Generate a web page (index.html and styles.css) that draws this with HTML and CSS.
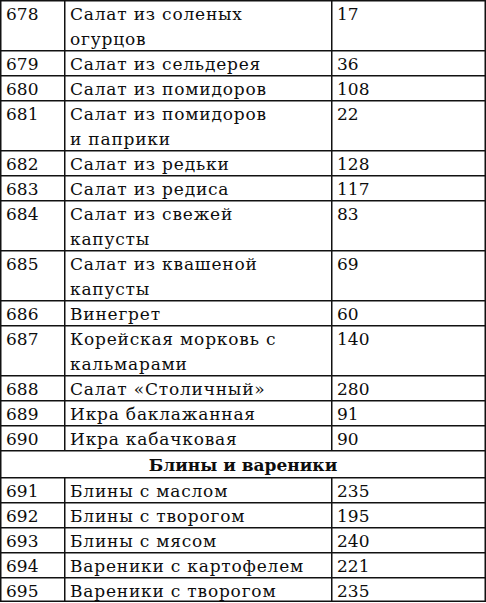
FILE: index.html
```html
<!DOCTYPE html>
<html lang="ru">
<head>
<meta charset="utf-8">
<title>Таблица</title>
<link rel="stylesheet" href="styles.css">
</head>
<body>
<table class="menu">
  <colgroup>
    <col class="c-num">
    <col class="c-name">
    <col class="c-val">
  </colgroup>
  <tbody>
    <tr><td><div class="cell">678</div></td><td class="name"><div class="cell">Салат из соленых<br>огурцов</div></td><td><div class="cell">17</div></td></tr>
    <tr><td><div class="cell">679</div></td><td class="name"><div class="cell">Салат из сельдерея</div></td><td><div class="cell">36</div></td></tr>
    <tr><td><div class="cell">680</div></td><td class="name"><div class="cell">Салат из помидоров</div></td><td><div class="cell">108</div></td></tr>
    <tr><td><div class="cell">681</div></td><td class="name"><div class="cell">Салат из помидоров<br>и паприки</div></td><td><div class="cell">22</div></td></tr>
    <tr><td><div class="cell">682</div></td><td class="name"><div class="cell">Салат из редьки</div></td><td><div class="cell">128</div></td></tr>
    <tr><td><div class="cell">683</div></td><td class="name"><div class="cell">Салат из редиса</div></td><td><div class="cell">117</div></td></tr>
    <tr><td><div class="cell">684</div></td><td class="name"><div class="cell">Салат из свежей<br>капусты</div></td><td><div class="cell">83</div></td></tr>
    <tr><td><div class="cell">685</div></td><td class="name"><div class="cell">Салат из квашеной<br>капусты</div></td><td><div class="cell">69</div></td></tr>
    <tr><td><div class="cell">686</div></td><td class="name"><div class="cell">Винегрет</div></td><td><div class="cell">60</div></td></tr>
    <tr><td><div class="cell">687</div></td><td class="name"><div class="cell">Корейская морковь с<br>кальмарами</div></td><td><div class="cell">140</div></td></tr>
    <tr><td><div class="cell">688</div></td><td class="name"><div class="cell">Салат «Столичный»</div></td><td><div class="cell">280</div></td></tr>
    <tr><td><div class="cell">689</div></td><td class="name"><div class="cell">Икра баклажанная</div></td><td><div class="cell">91</div></td></tr>
    <tr><td><div class="cell">690</div></td><td class="name"><div class="cell">Икра кабачковая</div></td><td><div class="cell">90</div></td></tr>
    <tr class="section"><td colspan="3"><div class="cell">Блины и вареники</div></td></tr>
    <tr><td><div class="cell">691</div></td><td class="name"><div class="cell">Блины с маслом</div></td><td><div class="cell">235</div></td></tr>
    <tr><td><div class="cell">692</div></td><td class="name"><div class="cell">Блины с творогом</div></td><td><div class="cell">195</div></td></tr>
    <tr><td><div class="cell">693</div></td><td class="name"><div class="cell">Блины с мясом</div></td><td><div class="cell">240</div></td></tr>
    <tr><td><div class="cell">694</div></td><td class="name"><div class="cell">Вареники с картофелем</div></td><td><div class="cell">221</div></td></tr>
    <tr><td><div class="cell">695</div></td><td class="name"><div class="cell">Вареники с творогом</div></td><td><div class="cell">235</div></td></tr>
  </tbody>
</table>
</body>
</html>
```
FILE: styles.css
```css
html, body {
  margin: 0;
  padding: 0;
  background: #fff;
}

.menu {
  width: 486px;
  border-collapse: separate;
  border-spacing: 0;
  table-layout: fixed;
  font-family: "DejaVu Serif", "Liberation Serif", serif;
  font-size: 17px;
  color: #0d0d0d;
  box-shadow: inset -1.5px -1.5px 0 #111;
}

.c-num { width: 64px; }
.c-name { width: 267px; }
.c-val { width: 155px; }

.menu td {
  padding: 0 6px;
  vertical-align: top;
  white-space: nowrap;
  box-shadow: inset 1.5px 1.5px 0 #111;
}

.cell {
  line-height: 25px;
  padding-top: 2px;
  margin-bottom: -2px;
}

.menu td.name {
  letter-spacing: 0.8px;
}

.menu .section td {
  text-align: center;
  font-weight: bold;
}

.menu .section .cell {
  line-height: 27px;
}
```
